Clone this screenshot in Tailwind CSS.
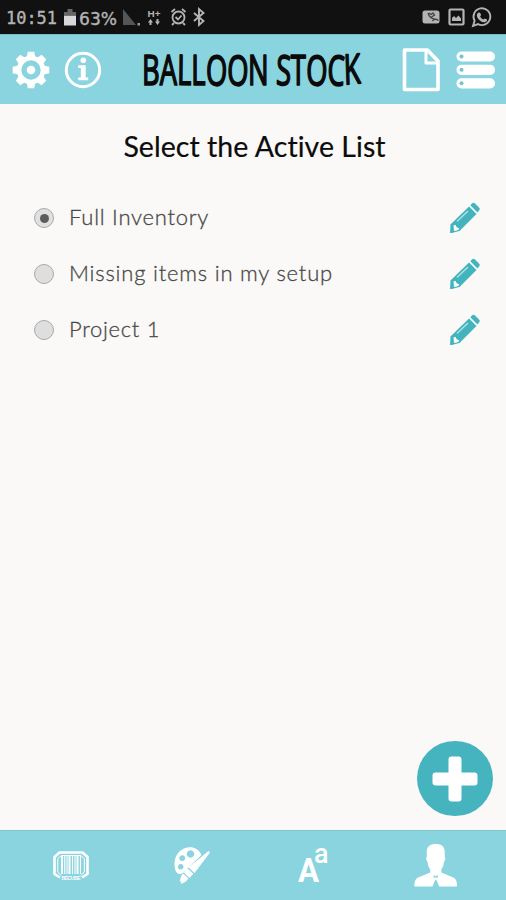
<!DOCTYPE html>
<html lang="en">
<head>
<meta charset="utf-8">
<title>Balloon Stock</title>
<script src="https://cdn.jsdelivr.net/npm/@tailwindcss/browser@4"></script>
</head>
<body class="bg-[#faf9f7]">
<div class="w-[506px] h-[900px] flex flex-col overflow-hidden bg-[#faf9f7] font-['Lato',sans-serif]">
  <!-- Status bar -->
  <div class="h-[34px] shrink-0 bg-[#111111]">
    <svg class="block" width="506" height="34" viewBox="0 0 506 34" fill="none" stroke="#b4b4b4">
      <g fill="#b4b4b4" stroke="none" font-family="'DejaVu Sans Mono', monospace">
        <text x="6" y="24" font-size="18.500" textLength="51" lengthAdjust="spacingAndGlyphs" stroke="#b4b4b4" stroke-width=".4">10:51</text>
        <text x="79" y="24.500" font-size="18.500" textLength="38" lengthAdjust="spacingAndGlyphs" font-family="'DejaVu Sans', sans-serif" stroke="#b4b4b4" stroke-width=".4">63%</text>
        <text x="147.500" y="16.500" font-size="9" font-weight="bold" textLength="13" lengthAdjust="spacingAndGlyphs" font-family="'Liberation Sans', sans-serif">H+</text>
      </g>
      <path d="M64 15v-3h3.500v-3h5v3H76v3z" fill="#666" stroke="none"/>
      <path d="M64 15.500h12V25.500H64z" fill="#d8d8d8" stroke="none"/>
      <path d="M123 9v16h13z" fill="#555" stroke="none"/>
      <path d="M137.500 23h2.500v2.500h-2.500z" fill="#999" stroke="none"/>
      <path d="M148 22.500l2.500-3.500 2.500 3.500h-1.500V25h-2v-2.500zM155 21.500l2.500 3.500 2.500-3.500h-1.500V19h-2v2.500z" fill="#b4b4b4" stroke="none"/>
      <circle cx="178.500" cy="17.500" r="6" stroke-width="1.800"/>
      <path d="M171.500 12l3.500-3M185.500 12L182 9M174 23l-2 2M183 23l2 2M175.500 17l2.500 2.500 3.500-4" stroke-width="1.800"/>
      <path d="M194 13l9.500 8-4.500 4V9l4.500 4-9.500 8" stroke-width="1.900"/>
      <rect x="422.500" y="10.500" width="17" height="13" rx="2.500" fill="#b4b4b4" stroke="none"/>
      <path d="M428 13c1 3.500 3 5.500 6.500 6M429 13l2 1.500 2-1.500 1.500 2-3 2" stroke="#444" stroke-width="1.300"/>
      <path d="M432.500 21c1.500-2 4-2 6-.5" stroke="#444" stroke-width="1.300"/>
      <rect x="449.500" y="9.500" width="14" height="15" rx="1" stroke-width="2.200"/>
      <path d="M452 21v-3l2-2 2 2 2.500-2.500 2.500 3V21z" fill="#b4b4b4" stroke="none"/>
      <path d="M473 26l1.600-5.200a8.400 8.400 0 1 1 3.400 3.300z" stroke-width="1.900"/>
      <path d="M478.300 12.800c.9-.7 1.600-.5 2 .5l.8 1.800-1 1.400c.8 1.500 1.900 2.500 3.400 3.100l1.200-1.200 2.300 1.200c.4 1.800-1.500 2.900-3.300 2.700-3.800-.6-7.700-5-6.700-8.100.2-.6.700-1 1.300-1.400z" fill="#b4b4b4" stroke="none"/>
    </svg>
  </div>
  <!-- Header -->
  <header class="h-[70px] shrink-0 bg-[#8ad4df] border-t border-[#78b9c2] flex items-center pl-[12px] pr-[10px]">
    <svg class="w-[38px] h-[38px] shrink-0" viewBox="-19 -19 38 38">
      <g fill="#fff">
        <path id="tooth" d="M-4.500-12l1.300-6.300h6.400L4.500-12z"/>
        <use href="#tooth" transform="rotate(45)"/><use href="#tooth" transform="rotate(90)"/><use href="#tooth" transform="rotate(135)"/>
        <use href="#tooth" transform="rotate(180)"/><use href="#tooth" transform="rotate(225)"/><use href="#tooth" transform="rotate(270)"/><use href="#tooth" transform="rotate(315)"/>
        <circle r="4.300"/>
      </g>
      <circle r="12" fill="none" stroke="#fff" stroke-width="4.600"/>
    </svg>
    <svg class="w-[38px] h-[38px] shrink-0 ml-[14px]" viewBox="0 0 38 38">
      <circle cx="19" cy="19" r="16.700" fill="none" stroke="#fff" stroke-width="3"/>
      <circle cx="19.300" cy="9.300" r="2.800" fill="#fff"/>
      <path d="M14.200 14.200h7.500v12.200h2.500v2.800h-10v-2.800h2.600V17h-2.600z" fill="#fff"/>
    </svg>
    <svg class="w-[226px] h-[66px] shrink-0 ml-[38px]" viewBox="0 -11 226 66" aria-label="Balloon Stock">
      <text x="2" y="36.500" rotate="0 0 1 0 3 3 0 0 3 0 3 3 -3" font-family="'Open Sans', sans-serif" font-size="41.500" font-weight="400" fill="#0a0a0a" stroke="#0a0a0a" stroke-width="1.700" stroke-linejoin="round" textLength="219" lengthAdjust="spacingAndGlyphs">BALLOON STOCK</text>
    </svg>
    <svg class="w-[38px] h-[44px] shrink-0 ml-auto" viewBox="0 0 38 44" fill="none" stroke="#fff" stroke-width="3.600" stroke-linejoin="round">
      <path d="M2.500 2h23L36 13v28.500H2.500z"/><path d="M24 2v13h12" stroke-width="3"/>
    </svg>
    <svg class="w-[40px] h-[38px] shrink-0 ml-[16px]" viewBox="0 0 40 38">
      <g fill="#fff"><rect x=".5" y=".5" width="38.500" height="10" rx="5"/><rect x=".5" y="13.700" width="38.500" height="10.300" rx="5"/><rect x=".5" y="27.200" width="38.500" height="10.300" rx="5"/></g>
      <g fill="#72c4cf"><circle cx="5.500" cy="5.500" r="2"/><circle cx="5.500" cy="18.800" r="2"/><circle cx="5.500" cy="32.300" r="2"/></g>
    </svg>
  </header>
  <!-- List selection -->
  <main class="relative flex-1 pt-[21px]">
    <h1 class="text-center text-[28.5px] leading-[42px] tracking-[0.05px] text-[#0c0c0c] [-webkit-text-stroke:0.2px_#0c0c0c] pl-[3px]">Select the Active List</h1>
    <ul class="mt-[22px]">
      <li class="h-[56px] flex items-center pl-[34px] pr-[25px]">
        <span class="size-[20px] mt-[2px] rounded-full border-[1.5px] border-[#aaa] bg-[#e0e0e0] flex items-center justify-center"><span class="size-[9px] rounded-full bg-[#5c5c5c]"></span></span>
        <span class="ml-[15px] text-[22px] leading-[28px] tracking-[0.75px] text-[#484848] font-light [-webkit-text-stroke:0.3px_#484848]">Full Inventory</span>
        <svg class="w-[32px] h-[32px] ml-auto mt-[2px]" viewBox="0 0 32 32"><g id="pencil"><path d="M20 4.500l7.500 7.500L10.500 29l-8 2H1l.5-8.500z" fill="#41b4be"/><path d="M21.300 3.300l1.700-1.700c1-1 2-1 3 0l4 4c1 1 1 2 0 3l-1.500 2z" fill="#41b4be"/><path d="M4.500 23.500l1.800-.7 1.500 2.500 2.400 1-.7 1.700-4.500 1.200z" fill="#faf9f7"/><path d="M2 25.500l4 4-4 1.500z" fill="#41b4be"/><path d="M8 19.500L19 9" stroke="#b9e2e4" stroke-width="1.300"/></g></svg>
      </li>
      <li class="h-[56px] flex items-center pl-[34px] pr-[25px]">
        <span class="size-[20px] mt-[2px] rounded-full border-[1.5px] border-[#aaa] bg-[#dedede]"></span>
        <span class="ml-[15px] text-[22px] leading-[28px] tracking-[0.8px] text-[#484848] font-light [-webkit-text-stroke:0.3px_#484848]">Missing items in my setup</span>
        <svg class="w-[32px] h-[32px] ml-auto mt-[2px]" viewBox="0 0 32 32"><use href="#pencil"/></svg>
      </li>
      <li class="h-[56px] flex items-center pl-[34px] pr-[25px]">
        <span class="size-[20px] mt-[2px] rounded-full border-[1.5px] border-[#aaa] bg-[#dedede]"></span>
        <span class="ml-[15px] text-[22px] leading-[28px] tracking-[0.7px] text-[#484848] font-light [-webkit-text-stroke:0.3px_#484848]">Project 1</span>
        <svg class="w-[32px] h-[32px] ml-auto mt-[2px]" viewBox="0 0 32 32"><use href="#pencil"/></svg>
      </li>
    </ul>
    <button class="absolute right-[13px] bottom-[14px] w-[76px] h-[75px] rounded-full bg-[#45b4bf] flex items-center justify-center" aria-label="Add">
      <svg class="w-[46px] h-[46px]" viewBox="0 0 46 46" fill="#fff"><rect x=".5" y="16.500" width="45" height="13" rx="3"/><rect x="16.500" y=".5" width="13" height="45" rx="3"/></svg>
    </button>
  </main>
  <!-- Bottom navigation -->
  <nav class="h-[70px] shrink-0 bg-[#8ad4df] border-t border-[#7fc5cf] grid grid-cols-4 items-center justify-items-center px-[10px]">
    <svg class="w-[38px] h-[44px]" viewBox="0 0 38 44" fill="none" stroke="#fff">
      <path d="M8 33.500L2.500 30V13L7.500 8.500h23l5 4.500v17l-5.500 3.500" stroke-width="2.600" stroke-linejoin="round"/>
      <path d="M9 31.500L5.800 28V14.500l3.500-3h19.500l3.500 3V28L29 31.500" stroke-width="1"/>
      <path d="M10 12v18M17.500 12v18M25.500 12v18" stroke-width="2"/><path d="M12.800 12v18M15 12v18M20.500 12v18M23 12v18M28.500 12v18" stroke-width="1.100"/>
      <text x="9.500" y="35.700" font-size="5" font-family="'Liberation Sans', sans-serif" font-weight="bold" fill="#fff" stroke="none" textLength="19">BECUBE</text>
    </svg>
    <svg class="w-[38px] h-[40px]" viewBox="0 1 38 40" fill="#fff">
      <path fill-rule="evenodd" d="M28.500 10C25 2 17 .5 10 4 2.500 8 0 17 2.300 25c1.200 4 4.500 5.200 7.700 3zM17.500 5.300a3.700 3.700 0 1 0 .01 0zM9.200 10.300a2.900 2.900 0 1 0 .01 0zM7.700 19a2.800 2.800 0 1 0 .01 0z"/>
      <path d="M35.500 6c1.300.5 1.600 1.500.8 2.500L21.500 28l-6-5.500z"/><path d="M14.500 23.600l5.800 5.200-3.800 4.300-5.800-5.500z"/><path d="M10 28.400l5.500 5.200c-2 2.500-4 4.800-8 5.200l1-2.500-2 .3c1.200-2 .5-5 3.500-8.200z"/>
    </svg>
    <svg class="w-[32px] h-[60px]" viewBox="0 -8 32 60" fill="#fff" font-family="Roboto, sans-serif">
      <text x="0" y="38" font-size="33" font-weight="bold" textLength="21" lengthAdjust="spacingAndGlyphs">A</text>
      <text x="16" y="18.500" font-size="27" font-weight="500" textLength="14.500" lengthAdjust="spacingAndGlyphs">a</text>
    </svg>
    <svg class="w-[44px] h-[44px]" viewBox="-.7 .5 44 44" fill="#fff">
      <path d="M22 .5c6 0 9.500 3 9 9v4c1 1 .6 3.500-.8 5-.3 4-1.600 6-2.600 7.500v3l12 5c3 1.500 3.700 4 3.800 9H25.500l-3-7-.8 0-3 7H.7c0-5 .8-7.500 3.800-9l12-5v-3c-1-1.500-2.300-3.500-2.600-7.500-1.400-1.500-1.800-4-.8-5v-4C12.500 3.500 16 .5 22 .5z"/>
      <path d="M20 31.500l2 1.300 2-1.300v3.200l-2-1-2 1z" fill="#8ad4df"/>
    </svg>
  </nav>
</div>
</body>
</html>
